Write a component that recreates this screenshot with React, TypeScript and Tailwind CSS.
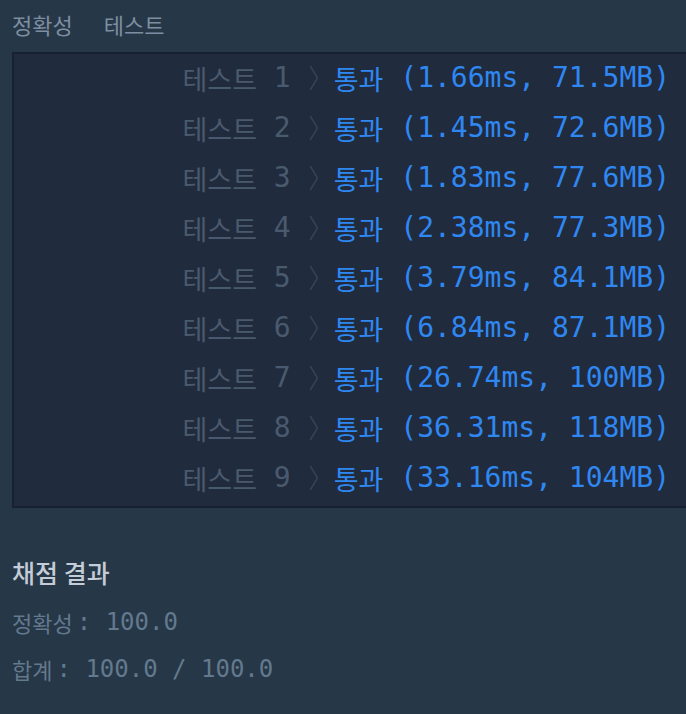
import React from 'react';

const results = [
  { n: 1, time: '1.66ms', mem: '71.5MB' },
  { n: 2, time: '1.45ms', mem: '72.6MB' },
  { n: 3, time: '1.83ms', mem: '77.6MB' },
  { n: 4, time: '2.38ms', mem: '77.3MB' },
  { n: 5, time: '3.79ms', mem: '84.1MB' },
  { n: 6, time: '6.84ms', mem: '87.1MB' },
  { n: 7, time: '26.74ms', mem: '100MB' },
  { n: 8, time: '36.31ms', mem: '118MB' },
  { n: 9, time: '33.16ms', mem: '104MB' },
];

const Chevron = () => (
  <svg width="10" height="26" viewBox="0 0 10 26" className="shrink-0">
    <path d="M1.5 1.5 L8.5 13 L1.5 24.5" fill="none" stroke="#33435a" strokeWidth="1.5" strokeLinecap="round" strokeLinejoin="round" />
  </svg>
);

const App: React.FC = () => {
  return (
    <div className="min-h-screen w-full bg-[#263747] overflow-hidden">
      {/* tabs */}
      <div className="flex pl-3 pt-[13px] text-[22px] leading-[22px] text-[#7e8ea1] font-['Noto_Sans_CJK_KR',sans-serif]">
        <span>정확성</span>
        <span className="ml-[31px]">테스트</span>
      </div>

      {/* test result box */}
      <div className="ml-3 mt-[17px] bg-[#202b3d] border-l-2 border-t-2 border-b-2 border-[#172130] py-px">
        {results.map(r => (
          <div key={r.n} className="flex items-center justify-end h-[50px] pb-[4px] pr-[16px]">
            <span className="text-[27px] leading-none text-[#4a5a6e] font-['Noto_Sans_CJK_KR',sans-serif]">테스트</span>
            <span className="text-[28px] leading-none text-[#4a5a6e] whitespace-pre font-['DejaVu_Sans_Mono',monospace]">{' ' + r.n}</span>
            <span className="ml-[18px] mr-[15px] flex items-center"><Chevron /></span>
            <span className="text-[27px] leading-none text-[#2f87f2] font-['Noto_Sans_CJK_KR',sans-serif]">통과</span>
            <span className="text-[28px] leading-none text-[#2f87f2] whitespace-pre font-['DejaVu_Sans_Mono',monospace]">
              {` (${r.time}, ${r.mem})`}
            </span>
          </div>
        ))}
      </div>

      {/* summary */}
      <div className="pl-3 mt-[52px]">
        <div className="text-[25px] leading-[24px] font-medium text-[#c3ccd7] font-['Noto_Sans_CJK_KR',sans-serif]">
          채점 결과
        </div>
        <div className="mt-[26px] flex items-center leading-[24px] text-[#63798e]">
          <span className="text-[22px] font-['Noto_Sans_CJK_KR',sans-serif]">정확성</span>
          <span className="ml-1 text-[24px] whitespace-pre font-['DejaVu_Sans_Mono',monospace]">: 100.0</span>
        </div>
        <div className="mt-[23px] flex items-center leading-[24px] text-[#63798e]">
          <span className="text-[22px] font-['Noto_Sans_CJK_KR',sans-serif]">합계</span>
          <span className="ml-1 text-[24px] whitespace-pre font-['DejaVu_Sans_Mono',monospace]">: 100.0 / 100.0</span>
        </div>
      </div>
    </div>
  );
};

export default App;
